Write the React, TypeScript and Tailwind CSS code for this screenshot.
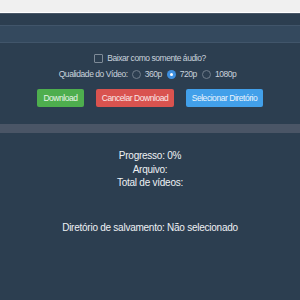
import React, { useState } from "react";

const qualities = ["360p", "720p", "1080p"];

export default function App() {
  const [audioOnly, setAudioOnly] = useState(false);
  const [quality, setQuality] = useState("720p");

  return (
    <div className="h-[300px] w-[300px] overflow-hidden bg-[#2c3e50]">
      {/* window chrome */}
      <div className="h-[13px] bg-[#f0f0f0] border-b border-white" />
      <div className="h-[12px] border-t border-[#4a5868] bg-[#2c3e50]" />
      <div className="h-[18px] border-y border-[#41556a] bg-[#34495e]" />

      {/* Options */}
      <div
        className="flex flex-col items-center pt-[10px] text-[8.5px] tracking-[-0.45px] text-[#c9d2dc]"
        style={{ fontFamily: '"Liberation Sans", Arial, sans-serif' }}
      >
        <label className="flex h-[10px] items-center gap-[4px]">
          <input
            type="checkbox"
            checked={audioOnly}
            onChange={() => setAudioOnly(!audioOnly)}
            className="h-[9px] w-[9px] appearance-none rounded-[1px] border border-[#7e8a97] bg-transparent"
          />
          <span>Baixar como somente áudio?</span>
        </label>

        <div className="mt-[6px] flex h-[10px] items-center">
          <span className="mr-[4px]">Qualidade do Vídeo:</span>
          {qualities.map((q) => (
            <label key={q} className="mr-[5px] flex items-center gap-[4px]">
              <span
                onClick={() => setQuality(q)}
                className={
                  quality === q
                    ? "flex h-[9px] w-[9px] items-center justify-center rounded-full bg-[#3d8fe0]"
                    : "h-[9px] w-[9px] rounded-full border border-[#6f7c8a]"
                }
              >
                {quality === q && <span className="h-[3px] w-[3px] rounded-full bg-white" />}
              </span>
              <span>{q}</span>
            </label>
          ))}
        </div>

        <div className="mt-[10px] flex gap-[12px] whitespace-nowrap">
          <button className="h-[18px] w-[47px] rounded-[2px] bg-[#4eae4e] text-[#e8f5e8]">
            Download
          </button>
          <button className="h-[18px] w-[78px] rounded-[2px] bg-[#d9534f] text-[#fbe8e8]">
            Cancelar Download
          </button>
          <button className="h-[18px] w-[77px] rounded-[2px] bg-[#42a0ea] text-[#eaf4fd]">
            Selecionar Diretório
          </button>
        </div>
      </div>

      <div className="mt-[17px] h-[9px] bg-[#4a5566]" />

      {/* Status */}
      <div
        className="flex flex-col items-center pt-[16px] text-[10px] tracking-[-0.25px] leading-[13.5px] text-[#eef1f4]"
        style={{ fontFamily: '"Liberation Sans", Arial, sans-serif' }}
      >
        <div>Progresso: 0%</div>
        <div>Arquivo:</div>
        <div>Total de vídeos:</div>
        <div className="mt-[31px]">Diretório de salvamento: Não selecionado</div>
      </div>
    </div>
  );
}
